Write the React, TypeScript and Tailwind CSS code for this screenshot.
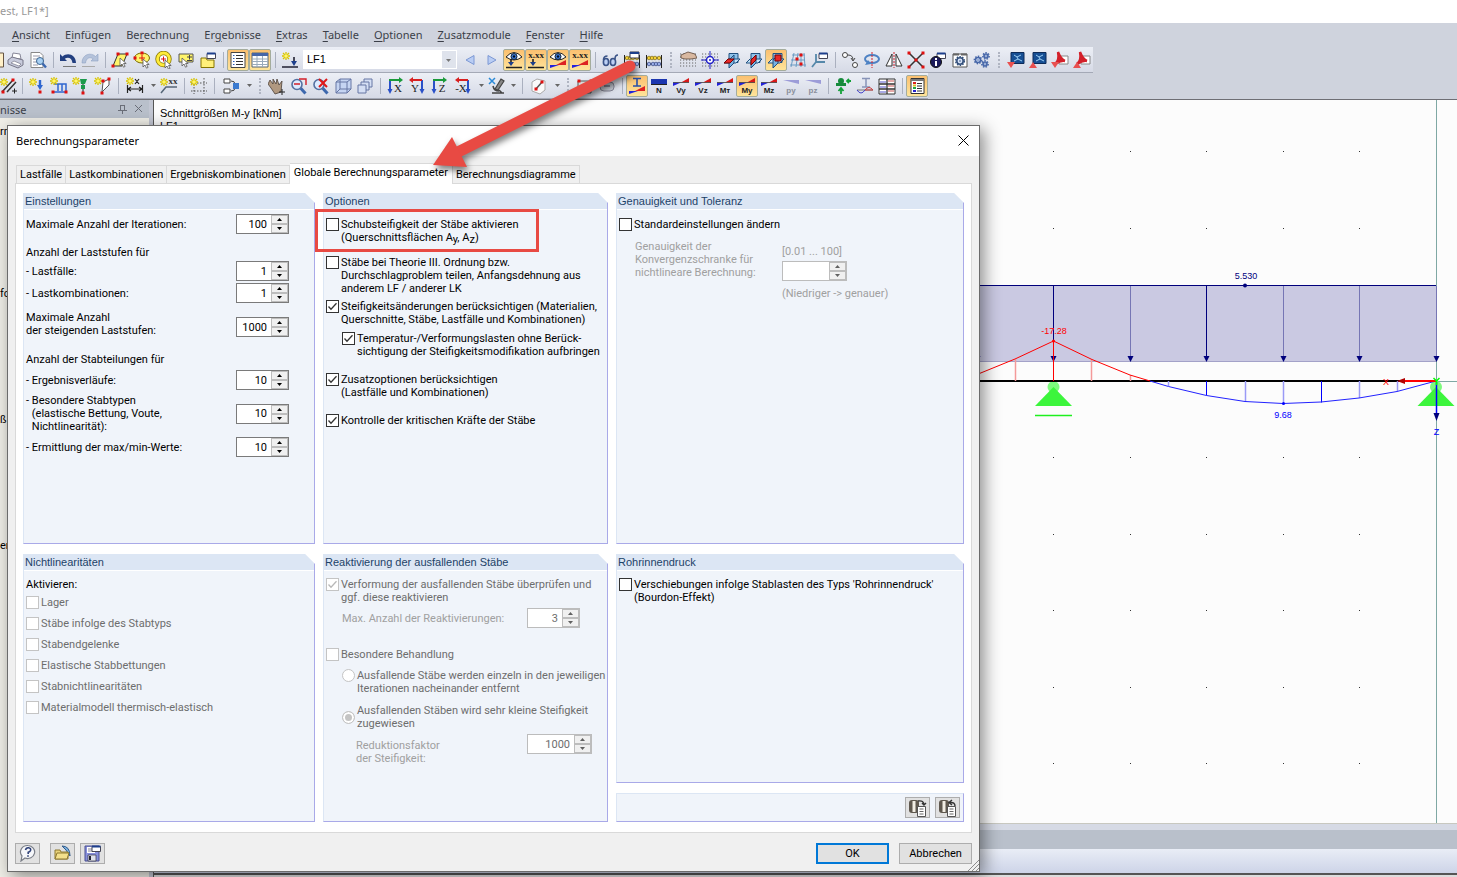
import { useId, type ReactNode } from "react";
import clsx from "clsx";

const RED = "#d3202a";
const NAVY = "#1d3f8c";
const LOAD = "#00007c";

/* ---------- toolbar icons, all on an 18 x 18 grid ---------- */

const Star = ({ x = 4, y = 4 }: { x?: number; y?: number }) => (
  <g transform={`translate(${x} ${y})`} stroke="#d8c400" strokeWidth="1.3">
    <path d="M0-4V4M-4 0H4M-3-3 3 3M3-3-3 3" />
    <circle r="1.800" fill="#fff56b" stroke="none" />
  </g>
);

const Dot = ({ x, y }: { x: number; y: number }) => (
  <rect x={x - 1.5} y={y - 1.5} width="3" height="3" fill="#e01010" />
);

const Cursor = ({ x, y }: { x: number; y: number }) => (
  <path
    transform={`translate(${x} ${y})`}
    d="M0 0v8l2-2 1.5 3.2 1.6-.8L3.600 5.500h2.600z"
    fill="#fff"
    stroke="#555"
    strokeWidth=".8"
  />
);

const Wedge = () => (
  <g>
    <path d="M1 5.500h8L1 9z" fill="#2222d8" />
    <path d="M9 5.500 17 1v4.500z" fill="#d81818" />
    <path d="M1 5.500h16" stroke="#444" strokeWidth=".8" />
  </g>
);

const Label = ({ text, dim = false }: { text: string; dim?: boolean }) => (
  <text
    x="9"
    y="16"
    textAnchor="middle"
    fontFamily="Liberation Sans"
    fontWeight="bold"
    fontSize="8"
    fill={dim ? "#8a8f9c" : "#222"}
    stroke="none"
  >
    {text}
  </text>
);

const force = (text: string, dim = false) => (
  <g>
    {dim ? <path d="M1 3h16v4z" fill="#9c9cd8" /> : <Wedge />}
    <Label text={text} dim={dim} />
  </g>
);

const axis = (text: string, flip: boolean) => (
  <g>
    <path d={flip ? "M14 3v11" : "M4 3v11"} stroke="#2a50c8" strokeWidth="2" />
    <path d={flip ? "M11.500 12h5L14 17z" : "M1.500 12h5L4 17z"} fill="#2a50c8" />
    <path d="M3 3h11" stroke={flip ? "#d82020" : "#1a9a3a"} strokeWidth="2" />
    <path d={flip ? "M5 0v6L1 3z" : "M13 0v6l4-3z"} fill={flip ? "#d82020" : "#1a9a3a"} />
    <text
      x={flip ? 7 : 12}
      y="15"
      textAnchor="middle"
      fontFamily="Liberation Serif"
      fontSize="11"
      fill="#222"
      stroke="none"
    >
      {text}
    </text>
  </g>
);

const lens = (extra: ReactNode) => (
  <g>
    <path d="m10.500 11 5 5.500" stroke="#3d68ad" strokeWidth="3" />
    <circle cx="7" cy="7.500" r="5" fill="#dceaff" stroke="#5470a0" strokeWidth="1.600" />
    {extra}
  </g>
);

const plane = (d: string) => (
  <g strokeWidth="1">
    <path d="M6 2.500h9v9H6z" fill="#8fc2ea" stroke="#205080" />
    <path d="M1 12 5 8h12l-4 4z" fill="#c4e2f8" stroke="#205080" />
    <path d="m6 9 5-5v8l-5 5z" fill="#78b2e2" stroke="#205080" />
    <path d={d} fill="#e82828" stroke="#700" />
  </g>
);

const gear = (x: number, y: number, r: number, color: string) => (
  <g transform={`translate(${x} ${y})`}>
    <circle r={r + 1.200} fill="none" stroke={color} strokeWidth="1.400" strokeDasharray="1.500 1.300" />
    <circle r={r} fill="#dbe6fa" stroke={color} strokeWidth="1.600" />
    <circle r=".8" fill={color} />
  </g>
);

const eye = (
  <g>
    <path d="M1 6q8-9 16 0-8 6-16 0z" fill="#fff" stroke="#222" />
    <circle cx="9" cy="5.500" r="3" fill="#3e78d8" stroke="#123" />
    <circle cx="9" cy="5.500" r="1.200" fill="#012" />
  </g>
);

const decimals = (
  <text x="9" y="7" textAnchor="middle" fontFamily="Liberation Serif" fontWeight="bold" fontSize="9" fill="#222" stroke="none">
    x.xx
  </text>
);

const resultWedge = (
  <g>
    <path d="M1 14h9l-9 3z" fill="#22d" />
    <path d="m7 14 10-5v5z" fill="#d22" />
  </g>
);

const loadArrow = (
  <g>
    <path d="M1 16.500h16M6 8v4" stroke="#222" strokeWidth="1.600" />
    <path d="M3 11h6l-3 4z" fill={NAVY} />
  </g>
);

const miniWindow = (
  <g>
    <path d="M8 2.500h8.500v5H8z" fill="#fff" stroke="#445" />
    <path d="M8 2.500h8.500" stroke={NAVY} strokeWidth="2" />
  </g>
);

const abacus = (
  <g>
    <path d="M1.500 4v13M16.500 4v13M1 7h16M1 13h16" stroke="#222" />
    {[4, 7, 10, 14].map((x) => (
      <circle key={x} cx={x} cy="7" r="1.800" fill="#f4d238" stroke="#6d5800" strokeWidth=".6" />
    ))}
    {[4, 8, 11, 14].map((x) => (
      <circle key={x} cx={x} cy="13" r="1.800" fill="#9aaee8" stroke="#203070" strokeWidth=".6" />
    ))}
  </g>
);

const dots = (
  <path
    d="M1 3h16M1 6h16M1 9h16M1 12h16M1 15h16"
    stroke="#666"
    strokeWidth="1.200"
    strokeDasharray="1.200 1.800"
  />
);

const monitor = (
  <g>
    <path d="M4 1.500h13v11H4z" fill="#164f94" stroke="#0d2b58" />
    <path d="m7 4 3 2 4-2M7 10l4-2 4 2M10 6l1 2" stroke="#9ed0f4" />
  </g>
);

const pdf = (
  <g>
    <path d="M8 5h9v8H8z" fill="#fff" stroke="#888" />
    <path d="M4 13c4-3 4-7 3-12 2 5 4 8 7 9-4-1-7 1-10 3z" fill={RED} stroke={RED} strokeWidth="2.400" />
  </g>
);

const roll = (
  <g>
    <rect x="0" y="1" width="10" height="13" rx="3" fill="#5f584e" />
    <path d="M5 2v11" stroke="#f2eee4" strokeWidth="3" />
    <path d="M8.500 7.500h8v10h-8z" fill="#fff" stroke="#555" />
    <path d="M10.500 10h4M10.500 12.500h4M10.500 15h4" stroke="#666" />
  </g>
);

const icons: Record<string, ReactNode> = {
  page: <path d="M-6 2H3.500v14H-6z" fill="#fff0c8" stroke="#654" />,
  print: (
    <g>
      <path d="m5 7 1-5 7 1 1 5z" fill="#fff" stroke="#889" />
      <path d="m1 9 4-3 11 3v5l-5 3-10-4z" fill="#c8cbdc" stroke="#778" />
      <path d="m4 12 8 3 2-2-7-3z" fill="#fff" stroke="#778" strokeWidth=".7" />
    </g>
  ),
  preview: (
    <g>
      <path d="M2 1.500h9l3 3v12H2z" fill="#fff" stroke="#888" />
      <path d="M4 5h7M4 8h5M4 11h4M4 14h5" stroke="#99a" />
      <circle cx="11" cy="10" r="3.500" fill="#a8d0f4" stroke="#3c6690" />
      <path d="m13.500 12.500 3.500 4" stroke="#3c68b0" strokeWidth="2.400" />
    </g>
  ),
  undo: (
    <g>
      <path d="M1 3v7h7L5.800 7.800C9 5.500 13 7 13.500 12H17C17 3 8 1 3.500 5.500z" fill="#223f80" />
      <path d="M4 15.500h13" stroke="#777" />
    </g>
  ),
  redo: (
    <g>
      <path d="M17 3v7h-7l2.200-2.200C9 5.500 5 7 4.500 12H1C1 3 10 1 14.500 5.500z" fill="#b4c2da" stroke="#8fa2c4" strokeWidth=".6" />
      <path d="M1 15.500h13" stroke="#aaa" />
    </g>
  ),
  skew: (
    <g>
      <path d="M2 15 7 3h9l-5 12z" fill="#fff46a" stroke="#333" />
      <Dot x={2} y={15} /><Dot x={7} y={3} /><Dot x={16} y={3} />
      <Cursor x={9} y={7} />
    </g>
  ),
  ellipse: (
    <g>
      <ellipse cx="9" cy="7" rx="7.500" ry="5" fill="#fff46a" stroke="#7a6a00" />
      <path d="M6 7h6M9 4v6" stroke="#e01010" />
      <Dot x={9} y={2} /><Dot x={2} y={7} /><Cursor x={10} y={8} />
    </g>
  ),
  ring: (
    <g>
      <circle cx="8.500" cy="8" r="6" stroke="#8a7800" strokeWidth="4.400" />
      <circle cx="8.500" cy="8" r="6" stroke="#ffec3a" strokeWidth="2.800" />
      <circle cx="8.500" cy="8" r="3.500" fill="#fff" />
      <path d="M6 8h5M8.500 5.500v5" stroke="#e01010" />
      <Cursor x={10} y={9} />
    </g>
  ),
  pick: (
    <g>
      <path d="M2 3h14v8H2z" fill="#fff46a" stroke="#555" />
      <path d="M10 6h5M12.500 4v4.500M10 9.500h5" stroke="#444" />
      <Cursor x={5} y={7} />
    </g>
  ),
  folder: (
    <g>
      <path d="M2 7h5l1 2h7v7.500H2z" fill="#fff07a" stroke="#857400" />
      {miniWindow}
    </g>
  ),
  list: (
    <g>
      <path d="M2 1.500h14v15H2z" fill="#fff" stroke="#444" />
      <path d="M7 4.500h7M7 7.500h7M7 10.500h7M7 13.500h7" stroke="#333" />
      <path d="M4 4.500h1.500M4 7.500h1.500M4 10.500h1.500M4 13.500h1.500" stroke="#2b5bb8" />
    </g>
  ),
  table: (
    <g>
      <path d="M1 2h16v14H1z" fill="#fff" stroke="#567" />
      <path d="M1 3.500h16" stroke="#4666a8" strokeWidth="3" />
      <path d="M1 8h16M1 10.500h16M1 13.500h16M6 5v11M11.500 5v11" stroke="#9ab" />
    </g>
  ),
  loadCase: (
    <g>
      <Star x={5} y={5} />
      <path d="M1 16h16M13 6v6" stroke="#223" strokeWidth="1.600" />
      <path d="M10 10h6l-3 5z" fill={NAVY} />
    </g>
  ),
  prev: <path d="M13 4.500v9L5 9z" fill="#b9cdf4" stroke="#7c98d4" />,
  next: <path d="M5 4.500v9L13 9z" fill="#b9cdf4" stroke="#7c98d4" />,
  eyeLoad: <g>{eye}{loadArrow}</g>,
  valLoad: <g>{decimals}{loadArrow}</g>,
  eyeResult: <g>{eye}{resultWedge}</g>,
  valResult: <g>{decimals}{resultWedge}</g>,
  glasses: (
    <g stroke="#3b5488" strokeWidth="1.600">
      <ellipse cx="5" cy="11" rx="2.600" ry="3.500" fill="#bcd0f4" />
      <ellipse cx="12" cy="11" rx="2.600" ry="3.500" fill="#bcd0f4" />
      <path d="M2.500 9q0-4 4-4M14 8q0-4 3-4" />
    </g>
  ),
  abacusNew: <g>{abacus}<path d="M7 1h9v6H7z" fill="#fff" stroke="#334" /><path d="M7 2h9" stroke={NAVY} strokeWidth="2" /></g>,
  abacus,
  gridHand: <g>{dots}<path d="m2 4 7-3 7 2 2 4-6 1H6L2 7z" fill="#d8b8a0" stroke="#5c4638" strokeWidth=".8" /></g>,
  gridSnap: <g>{dots}<path d="M9 0v18M0 9h18" stroke="#2222c8" /><circle cx="9" cy="9" r="3.500" fill="#fff" stroke="#2222c8" strokeWidth="1.500" /><circle cx="9" cy="9" r="1" fill="#2222c8" /></g>,
  planeXY: plane("m1 12 4-4h6l-4 4z"),
  planeYZ: plane("m6 9 5-5v5l-5 5z"),
  planeXZ: plane("M8 4h6v6H8z"),
  gridLines: (
    <g>
      <path d="M2 16 5 2M7 16l2-14M12 16V2M16 16 15 2M1 14h16M2 9h14M3 4h13" stroke="#6c9cc4" />
      <Dot x={8} y={8} /><Dot x={12} y={13} /><Dot x={12} y={4} />
    </g>
  ),
  axisWin: (
    <g>
      <path d="M5 3v8l-4 5M5 11h9" stroke="#58a" strokeWidth="1.800" />
      {miniWindow}
    </g>
  ),
  move: (
    <g stroke="#444">
      <circle cx="4" cy="4" r="2.500" fill="#fff" /><circle cx="14" cy="14" r="2.500" fill="#fff" />
      <path d="M7 4q5 0 5 5M10 7l2 3 2-3" />
    </g>
  ),
  rotate: (
    <g>
      <ellipse cx="9" cy="8" rx="7" ry="4" stroke="#4e82c4" strokeWidth="2" />
      <path d="m5 9 3 4-6 1z" fill="#4e82c4" /><path d="M9 1v16" stroke={RED} strokeDasharray="2 1" />
    </g>
  ),
  mirror: (
    <g stroke="#333">
      <path d="M7 3v12H1zM11 3v12h6z" fill="#fff" /><path d="M9 1v16" stroke={RED} strokeDasharray="2 1" />
    </g>
  ),
  cross: (
    <g>
      <path d="m2 2 14 14M16 2 2 16" stroke="#333" strokeWidth="1.500" />
      <Dot x={2} y={2} /><Dot x={16} y={2} /><Dot x={2} y={16} /><Dot x={16} y={16} /><Dot x={9} y={9} />
    </g>
  ),
  info: (
    <g>
      {miniWindow}
      <circle cx="7" cy="11" r="5.500" fill="#1a1a5c" stroke="#111" />
      <path d="M7 7v2M7 10v5" stroke="#fff" strokeWidth="2" />
    </g>
  ),
  settings: <g><path d="M2 3h14v13H2z" fill="#fff" stroke="#555" /><path d="M2 3.500h6M10 3.500h6" stroke="#666" strokeWidth="2" />{gear(9, 10, 3.200, "#34507c")}</g>,
  gears: <g>{gear(5, 9, 2.500, "#4666a8")}{gear(13, 5, 2, "#4666a8")}{gear(12, 13, 2, "#4666a8")}</g>,
  screenDown: <g>{monitor}<path d="M0 11h8l-4 6z" fill="#e85050" /></g>,
  screenUp: <g>{monitor}<path d="M0 17h8l-4-6z" fill="#e85050" /></g>,
  pdfDown: <g>{pdf}<path d="M0 11h8l-4 6z" fill="#e85050" /></g>,
  pdfUp: <g>{pdf}<path d="M0 17h8l-4-6z" fill="#e85050" /></g>,
  memberSet: (
    <g>
      <Star x={4} y={5} /><path d="M2 15 13 3M7 15 16 5" stroke="#333" strokeWidth="1.500" />
      <Dot x={3} y={15} /><Dot x={13} y={3} /><path d="M12 14h5M14.500 11.500v5" stroke="#222" />
    </g>
  ),
  nodeLoad: <g><Star x={5} y={5} /><path d="M12 3v6" stroke="#2f66d0" strokeWidth="2.400" /><path d="M9 8h6l-3 5z" fill="#2f66d0" /><Dot x={12} y={15} /></g>,
  lineLoad: <g><path d="M3 15h13M4 7h12v7M8 7v7M12 7v7" stroke="#2f66d0" strokeWidth="1.500" /><Star x={4} y={4} /><Dot x={3} y={15} /><Dot x={16} y={15} /></g>,
  support: <g><Star x={4} y={4} /><path d="M11 5v10" stroke="#222" /><path d="M8 2h7l-2 5H9z" fill="#1c9a4c" /><path d="M11 8v4" stroke="#1c9a4c" strokeWidth="4" /><Dot x={11} y={16} /></g>,
  freeLoad: <g><path d="m8 15 1-10 6-3v6z" fill="#fff" stroke="#555" /><Star x={4} y={4} /><Dot x={8} y={16} /><Dot x={9} y={4} /><Dot x={15} y={2} /></g>,
  dim: <g><Star x={4} y={4} /><path d="M1.500 8v8M16.500 8v8M2 12h14M5 10l-3 2 3 2M13 10l3 2-3 2M9 2l4 5M13 2 9 7" stroke="#222" strokeWidth="1.200" /></g>,
  comment: (
    <g>
      <path d="m1 16 5-6h11" stroke="#567" strokeWidth="1.500" /><Star x={4} y={5} />
      <text x="13" y="7" textAnchor="middle" fontFamily="Liberation Serif" fontWeight="bold" fontSize="9" fill="#333">xx</text>
    </g>
  ),
  guide: <g><path d="M4 4v13M14 1v16M1 6h16M1 14h16" stroke="#555" strokeDasharray="1.500 1.500" /><Star x={4} y={5} /></g>,
  renumber: (
    <g>
      <path d="M2 2h6v4H2zM2 12h6v4H2z" fill="#fff" stroke="#444" />
      <path d="M9 4q4 0 4 3M9 14q4 0 4-3" stroke="#444" /><path d="M11 6h6v6h-6z" fill="#3b7ad0" />
    </g>
  ),
  hand: <g><path d="m2 3 3 4V2l3 5 1-5 2 6 3-4-1 11-6 2-4-6-3-4z" fill="#b09880" stroke="#4b4038" strokeWidth=".8" /><path d="M11 15h6M14 12v6" stroke="#222" /></g>,
  zoomWin: lens(<path d="M9 2h7v6M4 7h6" stroke={RED} strokeWidth="1.400" />),
  zoomAll: lens(<path d="m7 2 8 8M15 2 7 10" stroke="#e01818" strokeWidth="2" />),
  cube: <g stroke="#6676a4"><path d="m2 5 4-3h11v10l-4 4H2z" fill="#c5d4f2" /><path d="M2 5h11v11M13 5l4-3M6 2v10h11M6 12l-4 4" /></g>,
  boxes: (
    <g stroke="#6676a4" fill="#d5dff4">
      <path d="M8 2h8v8H8z" /><path d="M5 5h8v8H5z" /><path d="M2 8h8v8H2z" />
    </g>
  ),
  axX: axis("X", false),
  axY: axis("Y", true),
  axZ: axis("Z", false),
  axNX: axis("-X", true),
  render: (
    <g>
      <path d="m1 1 6 6M7 1 1 7" stroke="#2a8ad8" strokeWidth="1.500" />
      <path d="m7 12 6-10 3 2-6 9z" fill="#888" stroke="#444" strokeWidth="1.200" />
      <path d="M4 16h12M5 9q1 5 6 5M11 13l3 3" stroke="#444" strokeWidth="1.600" />
    </g>
  ),
  clip: <g><path d="m2 5 5-3 8 2v9l-5 4-8-3z" fill="#fafafa" stroke="#aaa" /><path d="m6 12 6-7" stroke="#555" strokeWidth="1.500" /><Dot x={6} y={12} /><Dot x={12} y={5} /></g>,
  nodes: <g><path d="M2 4h13v12H2z" fill="#ddd" stroke="#555" /><Dot x={3} y={4} /><Dot x={15} y={4} /><Dot x={9} y={10} /></g>,
  shell: <g><rect x="2" y="5" width="14" height="9" rx="4" fill="#c8ccd6" stroke="#889" /><path d="M6 9h6" stroke="#889" strokeWidth="2" /></g>,
  section: <g><path d="M5 1.500h8M9 2v7M5 9h8" stroke="#2a50a8" strokeWidth="1.600" />{resultWedge}</g>,
  n: <g><path d="M1 2h16v5H1z" fill="#1c36b0" /><path d="M1 7.500h16" stroke="#222" /><Label text="N" /></g>,
  vy: force("Vy"),
  vz: force("Vz"),
  mt: force("Mᴛ"),
  my: force("My"),
  mz: force("Mz"),
  py: force("py", true),
  pz: force("pz", true),
  reactions: <g><circle cx="7" cy="4" r="3" fill="#168a3c" /><path d="M2 6h10v3H2z" fill="#168a3c" /><path d="M7 17v-5M4.500 14 7 11l2.500 3M17 4h-4M15 2l-2 2 2 2" stroke="#12a038" strokeWidth="1.800" /></g>,
  curve: <g><path d="M6 1.500h8M10 2v8M6 10h8" stroke="#8894b8" strokeWidth="1.500" /><path d="M1 13h16" stroke="#777" /><path d="M1 13q4 6 8 0" stroke="#44c" /><path d="M9 13q4-5 8 0z" stroke="#c44" /></g>,
  tiles: (
    <g>
      <path d="M1 2h16v15H1z" fill="#fff" stroke="#333" /><path d="M9 2v15M1 7h16M1 12h16" stroke="#333" strokeWidth="1.300" />
      <path d="M2 5h6M2 10h6M2 15h6" stroke="#55c" /><path d="M10 4h6M10 9h6M10 14h6" stroke="#c55" />
    </g>
  ),
  legend: (
    <g>
      <path d="M3 1.500h13v15H3z" fill="#fff" stroke="#333" /><path d="M3 3h13" stroke="#777" strokeWidth="2" />
      <path d="M9 6.500h5M9 9h5M9 11.500h5M9 14h5" stroke="#333" />
      <path d="M5 6h3" stroke="#d22" strokeWidth="2" /><path d="M5 8.500h3" stroke="#db2" strokeWidth="2" />
      <path d="M5 11h3" stroke="#2a4" strokeWidth="2" /><path d="M5 14h3" stroke="#22c" strokeWidth="2" />
    </g>
  ),
  help: (
    <g>
      <path d="M9 1.500a7 6.500 0 1 1-3 12.500l-4 3 1-5A7 6.500 0 0 1 9 1.500z" fill="#f6f7fa" stroke="#7b7f88" strokeWidth="1.200" />
      <path d="M6.500 6q.5-2.500 3-2.300 2.800.4 2 2.800-.6 1.300-2.300 1.800V10M9 11.300v1.500" stroke="#2d3f76" strokeWidth="1.600" />
    </g>
  ),
  open: (
    <g>
      <path d="M8 2q8 0 8 10l-4-6z" fill="#7ab0de" stroke="#335c8c" /><path d="M1 6h5l1 2h7v7H1z" fill="#e8d27a" stroke="#8d7830" />
      <path d="M1 15 3 9h12l-2 6z" fill="#f3e08c" stroke="#8d7830" />
    </g>
  ),
  save: (
    <g>
      <path d="M1 2h14v15H1z" fill="#8890dc" stroke="#484f90" /><path d="M4 11h8v6H4z" fill="#dfe2ec" stroke="#334" strokeWidth=".7" />
      <path d="M3 3h8v6H3z" fill="#fff" /><path d="M4 5h5M4 7h5" stroke="#889" /><path d="M6 12v4" stroke="#223" strokeWidth="2" />
      {miniWindow}
    </g>
  ),
  copyTo: <g>{roll}<path d="M9 2q6-1 6 4M13 4l2 2 2-2" stroke="#333" strokeWidth="1.400" /></g>,
  copyFrom: <g>{roll}<path d="M16 7q0-4-5-3.500M13 1l-3 2.500L13 6" stroke="#333" strokeWidth="1.400" /></g>,
};

function Icon({ name }: { name: string }) {
  return (
    <svg viewBox="0 0 18 18" className="size-[18px] shrink-0" fill="none" aria-hidden="true">
      {icons[name]}
    </svg>
  );
}

/* ---------- toolbars ---------- */

// "|" separator, "v" drop-down arrow, "*" prefix = switched on, "+" prefix = wider button
const topLeft = [
  "print", "preview", "|", "undo", "redo", "|", "skew", "ellipse", "ring", "pick", "folder", "|",
  "*list", "*table", "|", "loadCase",
];
const topMid = ["prev", "next", "*eyeLoad", "*valLoad", "*eyeResult", "*valResult", "|", "glasses", "abacusNew", "abacus"];
const topEdit = [
  "gridHand", "gridSnap", "planeXY", "planeYZ", "*planeXZ", "gridLines", "axisWin", "|",
  "move", "rotate", "mirror", "cross", "info", "settings", "gears",
];
const topExport = ["screenDown", "screenUp", "pdfDown", "pdfUp"];
const lowInsert = [
  "|", "nodeLoad", "lineLoad", "support", "freeLoad", "|", "+dim", "v", "comment", "|", "guide", "|", "+renumber", "v",
];
const lowView = [
  "hand", "zoomWin", "zoomAll", "cube", "boxes", "|", "axX", "axY", "axZ", "+axNX", "v", "render", "v", "|", "+clip", "v",
];
const lowResults = [
  "nodes", "shell", "|", "*section", "n", "vy", "vz", "mt", "*my", "mz", "py", "pz", "|",
  "reactions", "curve", "tiles", "|", "*legend",
];

function Tools({ items }: { items: string[] }) {
  return (
    <>
      {items.map((item, index) => {
        if (item === "|") {
          return (
            <span key={index} className="flex w-2 justify-center">
              <span className="h-4 w-px bg-[#aab0bf]" />
            </span>
          );
        }
        const on = item.startsWith("*");
        const wide = item.startsWith("+");
        if (item === "v") {
          return (
            <button key={index} type="button" aria-label="Mehr" className="flex w-2.5 justify-center">
              <svg viewBox="0 0 5 3" className="h-[3px] w-[5px]"><path d="M0 0h5L2.500 3z" fill="#666" /></svg>
            </button>
          );
        }
        const name = on || wide ? item.slice(1) : item;
        return (
          <button
            key={index}
            type="button"
            aria-label={name}
            aria-pressed={on}
            className={clsx(
              "flex h-[22px] shrink-0 items-center justify-center",
              wide ? "w-[26px]" : "w-[22px]",
              on && "rounded-xs border border-[#a4ac9c] bg-linear-to-b from-[#fbc070] to-[#fee49a]"
            )}
          >
            <Icon name={name} />
          </button>
        );
      })}
    </>
  );
}

function Band({ grip = true, children }: { grip?: boolean; children: ReactNode }) {
  return (
    <div className="flex h-[26px] shrink-0 items-center border-b border-[#a4a9b6] bg-linear-to-b from-[#eceff6] to-[#d6dae6]">
      {grip && (
        <span className="flex w-3 justify-center">
          <span className="h-4 w-0 border-l-2 border-dotted border-[#b0b5c2]" />
        </span>
      )}
      {children}
    </div>
  );
}

const menu: [string, string, string][] = [
  ["", "A", "nsicht"],
  ["E", "i", "nfügen"],
  ["Be", "r", "echnung"],
  ["Er", "g", "ebnisse"],
  ["", "E", "xtras"],
  ["", "T", "abelle"],
  ["", "O", "ptionen"],
  ["", "Z", "usatzmodule"],
  ["", "F", "enster"],
  ["", "H", "ilfe"],
];

/* ---------- dialog controls ---------- */

function Group({ title, className, children }: { title: string; className?: string; children: ReactNode }) {
  return (
    <section
      className={clsx(
        "flex flex-col border-r border-b border-l border-r-[#a9a9e8] border-b-[#a9a9e8] border-l-[#dce6f4] bg-[#f0f4fa] [clip-path:polygon(0_0,calc(100%-10px)_0,100%_10px,100%_100%,0_100%)]",
        className
      )}
    >
      <h2 className="h-4 bg-[#dce6f4] px-px font-['Liberation_Sans',sans-serif] text-[11px] leading-4 text-[#1c4268]">
        {title}
      </h2>
      <div className="flex flex-1 flex-col border-t border-white px-0.5">{children}</div>
    </section>
  );
}

function Spinner({ id, value, wide = false, disabled = false }: { id: string; value: string; wide?: boolean; disabled?: boolean }) {
  return (
    <span
      className={clsx(
        "flex h-5 shrink-0 border bg-white",
        wide ? "w-[65px]" : "w-[53px]",
        disabled ? "border-[#bcbcbc]" : "border-[#7a7a7a]"
      )}
    >
      <input
        id={id}
        type="text"
        defaultValue={value}
        disabled={disabled}
        className={clsx("w-full min-w-0 flex-1 pr-1 text-right", disabled && "text-[#6d6d6d]")}
      />
      <span className="flex w-[17px] shrink-0 flex-col bg-[#e9e9e9]">
        {["M0 3h5L2.500 0z", "M0 0h5L2.500 3z"].map((d, index) => (
          <button
            key={d}
            type="button"
            disabled={disabled}
            aria-label={index === 0 ? "Mehr" : "Weniger"}
            className="flex flex-1 items-center justify-center border border-[#bdbdbd] bg-[#f0f0f0]"
          >
            <svg viewBox="0 0 5 3" className="h-[3px] w-[5px]">
              <path d={d} fill={disabled ? "#606060" : "#000"} />
            </svg>
          </button>
        ))}
      </span>
    </span>
  );
}

function NumberRow({ label, value, className }: { label: ReactNode; value: string; className?: string }) {
  const id = useId();
  return (
    <div className={clsx("flex w-[263px] justify-between", className)}>
      <label htmlFor={id}>{label}</label>
      <Spinner id={id} value={value} />
    </div>
  );
}

function Check({
  children,
  checked = false,
  disabled = false,
  className,
}: {
  children: ReactNode;
  checked?: boolean;
  disabled?: boolean;
  className?: string;
}) {
  return (
    <label className={clsx("flex items-start gap-0.5 whitespace-nowrap", disabled && "text-[#6d6d6d]", className)}>
      <span className="relative size-[13px] shrink-0">
        <input
          type="checkbox"
          defaultChecked={checked}
          disabled={disabled}
          className="peer block size-[13px] appearance-none border border-[#333] bg-white disabled:border-[#c4c4c4]"
        />
        <svg
          viewBox="0 0 13 13"
          className="pointer-events-none absolute inset-0 hidden text-[#333] peer-checked:block peer-disabled:text-[#b8b8b8]"
        >
          <path d="m2.500 6.500 2.500 2.800 5.500-6" fill="none" stroke="currentColor" strokeWidth="1.300" />
        </svg>
      </span>
      <span>{children}</span>
    </label>
  );
}

function Radio({ children, checked = false, className }: { children: ReactNode; checked?: boolean; className?: string }) {
  return (
    <label className={clsx("flex gap-0.5 pl-4 whitespace-nowrap text-[#6d6d6d]", className)}>
      <input
        type="radio"
        name="behandlung"
        defaultChecked={checked}
        disabled
        className="block size-[13px] shrink-0 appearance-none rounded-full border border-[#c4c4c4] bg-white checked:bg-[#c4c4c4] checked:shadow-[inset_0_0_0_2px_#fff]"
      />
      <span>{children}</span>
    </label>
  );
}

function SmallButton({ name }: { name: string }) {
  return (
    <button
      type="button"
      aria-label={name}
      className="flex h-[21px] w-[25px] items-center justify-center border border-[#adadad] bg-[#e1e1e1]"
    >
      <Icon name={name} />
    </button>
  );
}

const tabs = [
  "Lastfälle",
  "Lastkombinationen",
  "Ergebniskombinationen",
  "Globale Berechnungsparameter",
  "Berechnungsdiagramme",
];

const nonlinear = [
  "Lager",
  "Stäbe infolge des Stabtyps",
  "Stabendgelenke",
  "Elastische Stabbettungen",
  "Stabnichtlinearitäten",
  "Materialmodell thermisch-elastisch",
];

function Dialog() {
  const range = useId();
  const reactivations = useId();
  const factor = useId();

  return (
    <div
      role="dialog"
      aria-label="Berechnungsparameter"
      className="absolute top-[125px] left-[7px] z-10 flex h-[747px] w-[973px] flex-col border border-[#6b6b6b] bg-[#f0f0f0] font-['Roboto',sans-serif] text-[11px] leading-[13px] text-black shadow-[4px_4px_16px_rgba(0,0,0,0.45)]"
    >
      <header className="flex h-[30px] shrink-0 items-center justify-between bg-white px-2 pb-0.5 font-['Noto_Sans',sans-serif]">
        <h1>Berechnungsparameter</h1>
        <button type="button" aria-label="Schließen" className="grid size-4 place-items-center">
          <svg viewBox="0 0 11 11" className="size-[11px]">
            <path d="m.5.5 10 10M10.500.5l-10 10" stroke="#000" />
          </svg>
        </button>
      </header>

      <nav role="tablist" className="flex h-[27px] shrink-0 items-end px-2">
        {tabs.map((tab, index) => {
          const active = index === 3;
          return (
            <button
              key={tab}
              type="button"
              role="tab"
              aria-selected={active}
              className={clsx(
                "border-t border-r border-[#d9d9d9] whitespace-nowrap",
                index === 0 && "border-l",
                active ? "z-10 -mb-px h-[21px] bg-white px-1 pb-1" : "h-[18px] px-[3px]"
              )}
            >
              {tab}
            </button>
          );
        })}
      </nav>

      <div className="mx-[7px] flex flex-1 flex-col border border-[#d9d9d9] bg-white px-[7px] pt-[9px] pb-2.5">
        <div className="grid flex-1 grid-cols-[minmax(0,292fr)_minmax(0,285fr)_minmax(0,348fr)] grid-rows-[351fr_268fr] gap-x-2 gap-y-2.5">
          <Group title="Einstellungen">
            <NumberRow label="Maximale Anzahl der Iterationen:" value="100" className="mt-1 items-center" />
            <p className="mt-3">Anzahl der Laststufen für</p>
            <NumberRow label="- Lastfälle:" value="1" className="mt-0.5 items-center" />
            <NumberRow label="- Lastkombinationen:" value="1" className="mt-0.5 items-center" />
            <NumberRow
              label={<>Maximale Anzahl<br />der steigenden Laststufen:</>}
              value="1000"
              className="mt-2 items-end"
            />
            <p className="mt-4">Anzahl der Stabteilungen für</p>
            <NumberRow label="- Ergebnisverläufe:" value="10" className="mt-1 items-center" />
            <NumberRow
              label={<span className="flex"><span className="whitespace-pre">- </span><span>Besondere Stabtypen<br />(elastische Bettung, Voute,<br />Nichtlinearität):</span></span>}
              value="10"
              className="mt-1 items-center"
            />
            <NumberRow label="- Ermittlung der max/min-Werte:" value="10" className="mt-1 items-center" />
          </Group>

          <Group title="Optionen">
            <Check className="mt-2">
              Schubsteifigkeit der Stäbe aktivieren<br />
              (Querschnittsflächen A<span className="relative top-0.5">y</span>, A<span className="relative top-0.5">z</span>)
            </Check>
            <Check className="mt-3">
              Stäbe bei Theorie III. Ordnung bzw.<br />
              Durchschlagproblem teilen, Anfangsdehnung aus<br />
              anderem LF / anderer LK
            </Check>
            <Check checked className="mt-[5px]">
              Steifigkeitsänderungen berücksichtigen (Materialien,<br />
              Querschnitte, Stäbe, Lastfälle und Kombinationen)
            </Check>
            <Check checked className="mt-1.5 pl-4">
              Temperatur-/Verformungslasten ohne Berück-<br />
              sichtigung der Steifigkeitsmodifikation aufbringen
            </Check>
            <Check checked className="mt-[15px]">
              Zusatzoptionen berücksichtigen<br />
              (Lastfälle und Kombinationen)
            </Check>
            <Check checked className="mt-[15px]">Kontrolle der kritischen Kräfte der Stäbe</Check>
          </Group>

          <Group title="Genauigkeit und Toleranz">
            <Check className="mt-2">Standardeinstellungen ändern</Check>
            <div className="mt-[9px] flex pl-4 text-[#a0a0a0]">
              <label htmlFor={range} className="w-[147px]">
                Genauigkeit der<br />
                Konvergenzschranke für<br />
                nichtlineare Berechnung:
              </label>
              <div className="mt-[5px]">
                <p className="mb-[3px]">[0.01 ... 100]</p>
                <Spinner id={range} value="" wide disabled />
                <p className="mt-1.5">(Niedriger -&gt; genauer)</p>
              </div>
            </div>
          </Group>

          <Group title="Nichtlinearitäten">
            <p className="mt-[7px]">Aktivieren:</p>
            <div className="mt-[5px] flex flex-col gap-2">
              {nonlinear.map((item) => (
                <Check key={item} disabled>{item}</Check>
              ))}
            </div>
          </Group>

          <Group title="Reaktivierung der ausfallenden Stäbe">
            <Check checked disabled className="mt-[7px]">
              Verformung der ausfallenden Stäbe überprüfen und<br />
              ggf. diese reaktivieren
            </Check>
            <div className="mt-1 flex items-center pl-4 text-[#a0a0a0]">
              <label htmlFor={reactivations} className="w-[185px]">Max. Anzahl der Reaktivierungen:</label>
              <Spinner id={reactivations} value="3" disabled />
            </div>
            <Check disabled className="mt-5">Besondere Behandlung</Check>
            <Radio className="mt-2 items-start">
              Ausfallende Stäbe werden einzeln in den jeweiligen<br />
              Iterationen nacheinander entfernt
            </Radio>
            <Radio checked className="mt-[9px] items-center">
              Ausfallenden Stäben wird sehr kleine Steifigkeit<br />
              zugewiesen
            </Radio>
            <div className="mt-1 flex items-start pl-[30px] text-[#a0a0a0]">
              <label htmlFor={factor} className="mt-[5px] w-[171px]">Reduktionsfaktor<br />der Steifigkeit:</label>
              <Spinner id={factor} value="1000" wide disabled />
            </div>
          </Group>

          <div className="flex flex-col gap-2.5">
            <Group title="Rohrinnendruck" className="flex-1">
              <Check className="mt-[7px]">
                Verschiebungen infolge Stablasten des Typs 'Rohrinnendruck'<br />
                (Bourdon-Effekt)
              </Check>
            </Group>
            <div className="flex h-[29px] items-center justify-end gap-[5px] border border-t-[#dce6f4] border-r-[#a9a9e8] border-b-[#a9a9e8] border-l-[#dce6f4] bg-[#f0f4fa] pr-[3px]">
              <SmallButton name="copyTo" />
              <SmallButton name="copyFrom" />
            </div>
          </div>
        </div>
      </div>

      <footer className="flex h-[38px] shrink-0 items-center px-[7px] pt-0.5">
        <SmallButton name="help" />
        <span className="w-2.5" />
        <SmallButton name="open" />
        <span className="w-[5px]" />
        <SmallButton name="save" />
        <div className="ml-auto flex gap-2.5">
          <button type="button" className="h-[21px] w-[73px] border-2 border-[#0078d7] bg-[#e1e1e1]">OK</button>
          <button type="button" className="h-[21px] w-[73px] border border-[#adadad] bg-[#e1e1e1]">Abbrechen</button>
        </div>
      </footer>
      <svg viewBox="0 0 12 12" className="absolute right-0 bottom-0 size-3" aria-hidden="true">
        <path d="M1 12 12 1M5 12l7-7M9 12l3-3" stroke="#8c8c8c" />
      </svg>
    </div>
  );
}

/* ---------- beam model ---------- */

const columns = [977, 1053, 1130, 1206, 1283, 1359, 1436];
const rows = [151, 228, 304, 381, 457, 534, 610, 687, 763];

function Support({ x }: { x: number }) {
  return (
    <g>
      <circle cx={x} cy="387" r="6" fill="#7dfa7d" />
      <path d={`M${x} 387 ${x + 18.500} 406h-37z`} fill="#3cf53c" />
    </g>
  );
}

function BeamView() {
  return (
    <svg viewBox="857 100 600 723" className="h-[723px] w-[600px] shrink-0" fill="none">
      {columns.map((x) => rows.map((y) => <rect key={`${x}-${y}`} x={x} y={y} width="1" height="1" fill="#333" />))}
      <path d="M1436.500 100v723M1436 381.500h21" stroke="#7fa8a4" />
      <path d="M857 285.500h579v76H857z" fill="#cac9e2" />
      <path d="M857 361.500h579" stroke="#a3a2c8" />
      <path d="M857 285.500h579" stroke={LOAD} />
      {columns.map((x, index) => (
        <g key={x}>
          <path d={`M${x + 0.5} 286v72`} stroke={index === 1 || index === 3 ? LOAD : "#7676b4"} />
          <path d={`M${x - 2.500} 356h6l-3 6z`} fill={LOAD} />
        </g>
      ))}
      <circle cx="1245" cy="285.500" r="2" fill={LOAD} />

      <Support x={1053.500} />
      <path d="M1035 415.500h37" stroke="#1ef01e" strokeWidth="1.500" />
      <Support x={1436} />

      <path d="M857 381h579" stroke="#000" strokeWidth="2" />
      <path d="M1015.500 359.500V381M1091.500 359.500V381M1130.500 375v6" stroke="#f49a9a" strokeWidth="1.500" />
      <path d="M977 374.500 1015 359 1053.500 341 1092 359.500 1130 375l20 6M1053.500 341v40" stroke="#f00" />
      <circle cx="1053.500" cy="341" r="1.500" fill="#f00" />
      <path d="M1168.500 381v5M1245.500 381v21M1283.500 381v22M1359.500 381v17M1397.500 381v10" stroke="#9a9af6" strokeWidth="1.500" />
      <path d="M1206.500 381v14.500M1321.500 381v21.500" stroke="#00f" />
      <path d="m1150 381 18.500 5.500 38 9 38.500 6 38 2 38-1.500 38-4 38-6.500 39-10.500" stroke="#22f" />
      <circle cx="1283.500" cy="403.500" r="1.500" fill="#00f" />

      <path d="M1402 381h34" stroke="#f00" strokeWidth="2" />
      <path d="m1397 381 8-3v6z" fill="#b00000" />
      <path d="M1436.500 382v33" stroke="#00f" strokeWidth="1.500" />
      <path d="M1433.500 413h6l-3 8z" fill={LOAD} />
      <path d="m1433.500 378 3 3 3-3M1436.500 381v4" stroke="#0f0" strokeWidth="1.500" />

      <g fontFamily="Liberation Sans" fontSize="9" textAnchor="middle">
        <text x="1246" y="279" fill={LOAD}>5.530</text>
        <text x="1054" y="334" fill="#f00">-17.28</text>
        <text x="1283" y="418" fill="#00f">9.68</text>
        <text x="1386" y="385" fill="#f00">X</text>
        <text x="1436.500" y="435" fill="#00f">Z</text>
      </g>
    </svg>
  );
}

function CallOut() {
  return (
    <>
      <div className="pointer-events-none absolute top-[209px] left-[315px] z-20 h-[43px] w-[224px] border-3 border-[#e84a43]" />
      <svg
        viewBox="420 50 230 130"
        className="pointer-events-none absolute top-[50px] left-[420px] z-20 h-[130px] w-[230px] drop-shadow-[2px_4px_3px_rgba(0,0,0,0.5)]"
        aria-hidden="true"
      >
        <path d="M630 66 458 152" stroke="#e84a43" strokeWidth="11" strokeLinecap="round" />
        <path d="m433 165 19-28 15 30z" fill="#e84a43" />
      </svg>
    </>
  );
}

export default function App() {
  return (
    <div className="relative flex h-screen flex-col overflow-hidden bg-[#cfd3dd] font-['Noto_Sans',sans-serif] text-[11px] text-[#3b3f48]">
      <div className="flex h-[23px] shrink-0 items-center bg-white text-[#999]">est, LF1*]</div>

      <nav className="flex h-6 shrink-0 items-center gap-[15px] pl-3">
        {menu.map(([before, key, after]) => (
          <button key={before + key + after} type="button" className="whitespace-nowrap">
            {before}
            <span className="underline underline-offset-2">{key}</span>
            {after}
          </button>
        ))}
      </nav>

      <div className="flex shrink-0">
        <Band grip={false}>
          <span className="flex w-[5px] overflow-hidden"><Icon name="page" /></span>
          <Tools items={topLeft} />
          <select
            aria-label="Lastfall"
            className="mx-0.5 h-[19px] w-[154px] appearance-none bg-white bg-[linear-gradient(#dfe3ec,#dfe3ec)] bg-[length:14px_17px] bg-[right_1px_center] bg-no-repeat pl-1 font-['Liberation_Sans',sans-serif] text-[11px] text-black"
          >
            <option>LF1</option>
          </select>
          <span className="pointer-events-none relative w-0">
            <svg viewBox="0 0 5 3" className="absolute -top-px right-2 h-[3px] w-[5px]"><path d="M0 0h5L2.500 3z" fill="#777" /></svg>
          </span>
          <Tools items={topMid} />
        </Band>
        <Band><Tools items={topEdit} /></Band>
        <Band><Tools items={topExport} /></Band>
      </div>
      <div className="flex shrink-0">
        <Band grip={false}>
          <span className="flex w-[18px] justify-end overflow-hidden"><Icon name="memberSet" /></span>
          <Tools items={lowInsert} />
        </Band>
        <Band><Tools items={lowView} /></Band>
        <Band><Tools items={lowResults} /></Band>
      </div>

      <div className="flex min-h-0 flex-1 border-t border-[#6e6e74]">
        <aside className="flex w-[149px] shrink-0 flex-col bg-[#f0efe8] font-['Roboto',sans-serif] leading-[13px] text-black">
          <div className="flex h-[18px] shrink-0 items-center justify-between bg-[#b9c0cb] pr-1.5 font-['Noto_Sans',sans-serif] text-[#3b3f48]">
            <span>nisse</span>
            <svg viewBox="0 0 26 10" className="h-2.5 w-[26px]" fill="none" stroke="#6a6e78">
              <path d="M3.500 1v5M7.500 1v5M3 1.500h5M1 6.500h9M5.500 7v3M18 1l7 7M25 1l-7 7" />
            </svg>
          </div>
          <p className="mt-[7px]">rm</p>
          <p className="mt-[149px]">fo</p>
          <p className="mt-[113px]">ß</p>
          <p className="mt-[113px]">er</p>
        </aside>
        <div className="w-1 shrink-0 bg-[#c3c7d3]" />
        <main className="flex min-w-0 flex-1 flex-col border-l border-[#555]">
          <div className="relative flex min-h-0 flex-1 justify-between overflow-hidden bg-[#fcfcfc]">
            <div className="shrink-0 px-1.5 pt-[7px] font-['Liberation_Sans',sans-serif] leading-[13px] whitespace-nowrap text-black">
              <p>Schnittgrößen M-y [kNm]</p>
              <p>LF1</p>
            </div>
            <BeamView />
          </div>
          <div className="h-[7px] shrink-0 border-t border-[#c8c8c0] bg-[#d6dae5]" />
          <div className="h-[19px] shrink-0 bg-[#b9c0cb]" />
          <div className="h-6 shrink-0 bg-linear-to-b from-[#e9edf6] to-[#cdd4e8]" />
          <div className="h-1 shrink-0 border-t-2 border-[#555] bg-[#ddd]" />
        </main>
      </div>

      <Dialog />
      <CallOut />
    </div>
  );
}
